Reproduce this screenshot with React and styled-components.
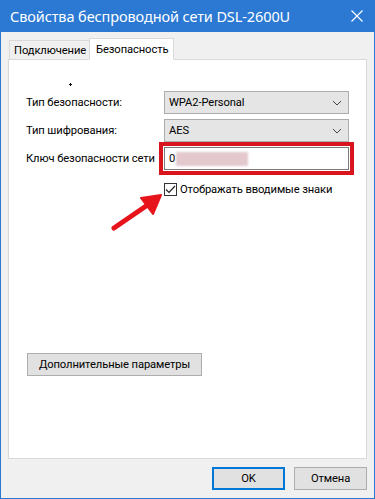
import React from "react";
import styled, { createGlobalStyle } from "styled-components";

const Global = createGlobalStyle`
  html, body { margin: 0; padding: 0; background: #fff; }
  * { box-sizing: border-box; }
`;

const Window = styled.div`
  width: 375px;
  height: 499px;
  display: flex;
  flex-direction: column;
  background: #f0f0f0;
  border: 1px solid #2b79d3;
  border-top: none;
  font-family: Roboto, "Noto Sans", sans-serif;
  font-size: 11.2px;
  letter-spacing: -0.1px;
  color: #000;
  position: relative;
  overflow: hidden;
`;

const TitleBar = styled.div`
  height: 32px;
  margin: 0 -1px;
  background: #2b79d3;
  color: #fff;
  display: flex;
  align-items: center;
  justify-content: space-between;
  padding: 0 10px 0 10px;
  font-family: "Noto Sans", sans-serif;
  font-size: 14.5px;
  letter-spacing: -0.1px;
  flex: none;
`;

const Body = styled.div`
  flex: 1;
  display: flex;
  flex-direction: column;
  padding: 5px 7px 8px 7px;
`;

const Tabs = styled.div`
  display: flex;
  align-items: flex-end;
  padding-left: 1px;
  height: 22px;
  position: relative;
  z-index: 1;
`;

const Tab = styled.div`
  height: ${(p) => (p.$active ? "22px" : "19px")};
  width: ${(p) => (p.$active ? "85px" : "81px")};
  padding: 0 ${(p) => (p.$active ? "6px" : "4px")};
  display: flex;
  align-items: center;
  white-space: nowrap;
  background: ${(p) => (p.$active ? "#fff" : "#f0f0f0")};
  border: 1px solid #d9d9d9;
  border-bottom: ${(p) => (p.$active ? "1px solid #fff" : "none")};
  margin-left: ${(p) => (p.$active ? "-1px" : "0")};
  margin-bottom: ${(p) => (p.$active ? "-1px" : "0")};
`;

const Panel = styled.div`
  flex: 1;
  background: #fff;
  border: 1px solid #d9d9d9;
  padding: 0 0 0 17px;
  display: flex;
  flex-direction: column;
`;

const Dot = styled.div`
  width: 3px;
  height: 3px;
  margin: 23px 0 0 43px;
  position: relative;
  &::before, &::after {
    content: "";
    position: absolute;
    background: #111;
  }
  &::before { left: 1px; top: 0; width: 1px; height: 3px; }
  &::after { left: 0; top: 1px; width: 3px; height: 1px; }
`;

const Form = styled.div`
  display: grid;
  grid-template-columns: 138px 185px;
  grid-auto-rows: 23px;
  row-gap: 5px;
  margin-top: 5px;
  align-items: center;
`;

const Label = styled.div`
  white-space: nowrap;
`;

const Select = styled.div`
  height: 23px;
  border: 1px solid #adadad;
  background: #e5e5e5;
  display: flex;
  align-items: center;
  justify-content: space-between;
  padding: 0 6px 0 4px;
`;

const InputBox = styled.div`
  height: 23px;
  border: 1px solid #7a7a7a;
  background: #fff;
  display: flex;
  align-items: center;
  padding: 0 4px;
  outline: 4px solid #d8141c;
  outline-offset: 1px;
`;

const Blur = styled.span`
  display: inline-block;
  width: 72px;
  height: 14px;
  margin-left: 1px;
  background: #e3c9cd;
  filter: blur(1px);
`;

const CheckRow = styled.div`
  grid-column: 2;
  display: flex;
  align-items: center;
  gap: 3px;
  margin-top: 5px;
  white-space: nowrap;
`;

const Box = styled.span`
  width: 13px;
  height: 13px;
  flex: none;
  border: 1px solid #333;
  background: #fff;
  display: flex;
  align-items: center;
  justify-content: center;
`;

const Button = styled.button`
  font-family: inherit;
  font-size: inherit;
  letter-spacing: inherit;
  color: #000;
  height: 23px;
  width: ${(p) => p.$w || "73px"};
  background: #e1e1e1;
  border: ${(p) => (p.$default ? "2px solid #0078d7" : "1px solid #adadad")};
  padding: 0;
`;

const MoreButton = styled(Button)`
  margin-top: 155px;
  margin-left: 1px;
  align-self: flex-start;
`;

const Footer = styled.div`
  display: flex;
  justify-content: flex-end;
  gap: 9px;
  padding-top: 8px;
`;

const Arrow = styled.svg`
  position: absolute;
  left: 100px;
  top: 185px;
  width: 80px;
  height: 60px;
  overflow: visible;
`;

const Chevron = () => (
  <svg width="10" height="6" viewBox="0 0 10 6">
    <path d="M1 1 L5 5 L9 1" fill="none" stroke="#444" strokeWidth="1" />
  </svg>
);

export default function App() {
  return (
    <>
      <Global />
      <Window>
        <TitleBar>
          <span>Свойства беспроводной сети DSL-2600U</span>
          <svg width="12" height="12" viewBox="0 0 12 12" style={{ marginRight: 2 }}>
            <path d="M0.5 0.5 L11.5 11.5 M11.5 0.5 L0.5 11.5" stroke="#fff" strokeWidth="1.2" />
          </svg>
        </TitleBar>
        <Body>
          <Tabs>
            <Tab>Подключение</Tab>
            <Tab $active>Безопасность</Tab>
          </Tabs>
          <Panel>
            <Dot />
            <Form>
              <Label>Тип безопасности:</Label>
              <Select>
                <span>WPA2-Personal</span>
                <Chevron />
              </Select>
              <Label>Тип шифрования:</Label>
              <Select>
                <span>AES</span>
                <Chevron />
              </Select>
              <Label>Ключ безопасности сети</Label>
              <InputBox>
                <span>0</span>
                <Blur />
              </InputBox>
              <CheckRow>
                <Box>
                  <svg width="11" height="9" viewBox="0 0 11 9">
                    <path d="M1 4.5 L4 7.5 L10 1" fill="none" stroke="#222" strokeWidth="1.2" />
                  </svg>
                </Box>
                <span>Отображать вводимые знаки</span>
              </CheckRow>
            </Form>
            <MoreButton $w="175px">Дополнительные параметры</MoreButton>
          </Panel>
          <Footer>
            <Button $default>OK</Button>
            <Button>Отмена</Button>
          </Footer>
        </Body>
        <Arrow viewBox="0 0 80 60">
          <path d="M13 43 L48 19" stroke="#e8141c" strokeWidth="5" strokeLinecap="round" />
          <path d="M60 10 L40 13 L52 29 Z" fill="#e8141c" stroke="#e8141c" strokeWidth="2" strokeLinejoin="round" />
        </Arrow>
      </Window>
    </>
  );
}
